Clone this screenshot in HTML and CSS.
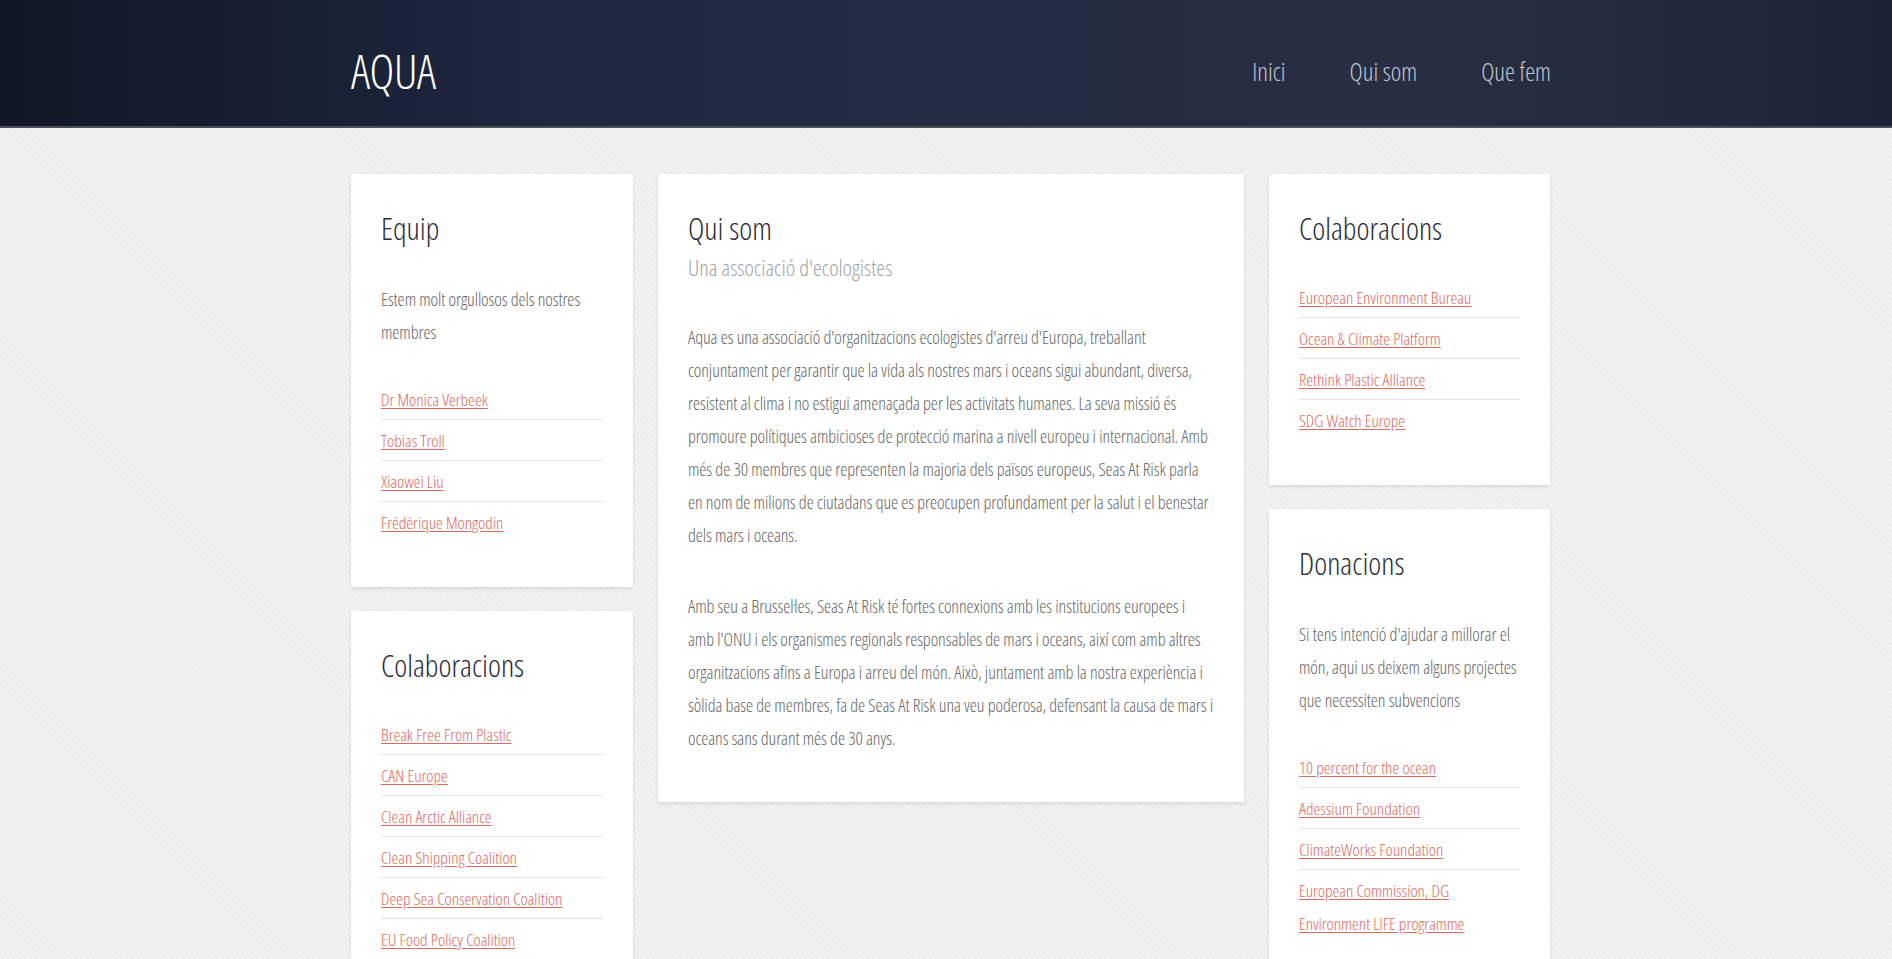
FILE: index.html
```html
<!DOCTYPE html>
<html lang="ca">
<head>
<meta charset="utf-8">
<title>AQUA</title>
<link rel="stylesheet" href="styles.css">
</head>
<body>
<header class="site-header">
  <div class="container header-inner">
    <a class="brand" href="#">AQUA</a>
    <nav class="main-nav">
      <a href="#">Inici</a>
      <a href="#">Qui som</a>
      <a href="#">Que fem</a>
    </nav>
  </div>
</header>

<main class="container layout">
  <div class="column">
    <section class="card">
      <h2 class="card-title">Equip</h2>
      <p class="card-text">Estem molt orgullosos dels nostres membres</p>
      <ul class="link-list">
        <li><a href="#">Dr Monica Verbeek</a></li>
        <li><a href="#">Tobias Troll</a></li>
        <li><a href="#">Xiaowei Liu</a></li>
        <li><a href="#">Frédérique Mongodin</a></li>
      </ul>
    </section>
    <section class="card">
      <h2 class="card-title">Colaboracions</h2>
      <ul class="link-list">
        <li><a href="#">Break Free From Plastic</a></li>
        <li><a href="#">CAN Europe</a></li>
        <li><a href="#">Clean Arctic Alliance</a></li>
        <li><a href="#">Clean Shipping Coalition</a></li>
        <li><a href="#">Deep Sea Conservation Coalition</a></li>
        <li><a href="#">EU Food Policy Coalition</a></li>
      </ul>
    </section>
  </div>

  <div class="column">
    <section class="card card-main">
      <h2 class="card-title">Qui som</h2>
      <h3 class="card-subtitle">Una associació d'ecologistes</h3>
      <p class="card-text">Aqua es una associació d'organitzacions ecologistes d'arreu d'Europa, treballant conjuntament per garantir que la vida als nostres mars i oceans sigui abundant, diversa, resistent al clima i no estigui amenaçada per les activitats humanes. La seva missió és promoure polítiques ambicioses de protecció marina a nivell europeu i internacional. Amb més de 30 membres que representen la majoria dels països europeus, Seas At Risk parla en nom de milions de ciutadans que es preocupen profundament per la salut i el benestar dels mars i oceans.</p>
      <p class="card-text">Amb seu a Brussel·les, Seas At Risk té fortes connexions amb les institucions europees i amb l'ONU i els organismes regionals responsables de mars i oceans, així com amb altres organitzacions afins a Europa i arreu del món. Això, juntament amb la nostra experiència i sòlida base de membres, fa de Seas At Risk una veu poderosa, defensant la causa de mars i oceans sans durant més de 30 anys.</p>
    </section>
  </div>

  <div class="column">
    <section class="card">
      <h2 class="card-title">Colaboracions</h2>
      <ul class="link-list">
        <li><a href="#">European Environment Bureau</a></li>
        <li><a href="#">Ocean &amp; Climate Platform</a></li>
        <li><a href="#">Rethink Plastic Alliance</a></li>
        <li><a href="#">SDG Watch Europe</a></li>
      </ul>
    </section>
    <section class="card">
      <h2 class="card-title">Donacions</h2>
      <p class="card-text">Si tens intenció d'ajudar a millorar el món, aqui us deixem alguns projectes que necessiten subvencions</p>
      <ul class="link-list">
        <li><a href="#">10 percent for the ocean</a></li>
        <li><a href="#">Adessium Foundation</a></li>
        <li><a href="#">ClimateWorks Foundation</a></li>
        <li><a href="#">European Commission, DG Environment LIFE programme</a></li>
      </ul>
    </section>
  </div>
</main>
</body>
</html>
```

FILE: styles.css
```css
* {
  box-sizing: border-box;
}

html, body {
  margin: 0;
  padding: 0;
}

body {
  font-family: "Open Sans", Roboto, "DejaVu Sans Condensed", sans-serif;
  font-stretch: 75%;
  font-weight: 300;
  color: #6a6a6a;
  background-color: #efefef;
  background-image: repeating-linear-gradient(45deg, #f3f3f3 0, #f3f3f3 2px, #ededed 2px, #ededed 4px);
  min-height: 100vh;
}

.container {
  width: 1210px;
  padding-left: 10px;
  margin: 0 auto;
}

/* Header */
.site-header {
  height: 128px;
  border-bottom: 2px solid #4a4f5a;
  background: linear-gradient(90deg, #111725 0%, #151c2c 9%, #1d2740 28%, #212b44 42%, #242c42 58%, #282e43 72%, #262c40 84%, #1d2336 100%);
}

.header-inner {
  height: 126px;
  padding-top: 16px;
  display: flex;
  align-items: center;
  justify-content: space-between;
}

.brand {
  color: #ffffff;
  text-decoration: none;
  font-size: 47px;
  letter-spacing: -0.4px;
  line-height: 1;
}

.main-nav {
  display: flex;
  gap: 64px;
}

.main-nav a {
  color: #c4c8d0;
  text-decoration: none;
  font-size: 25px;
  line-height: 1;
}

/* Layout */
.layout {
  display: grid;
  grid-template-columns: 282px 586px 281px;
  column-gap: 25px;
  align-items: start;
  padding-top: 46px;
  padding-bottom: 40px;
}

.column {
  display: flex;
  flex-direction: column;
  gap: 24px;
}

.card {
  background: #ffffff;
  padding: 36px 30px 45px;
  box-shadow: 0 2px 4px rgba(0, 0, 0, 0.09), 0 0 2px rgba(0, 0, 0, 0.04);
}

.card-main {
  padding-bottom: 47px;
}

.card-title {
  margin: 0;
  font-weight: 300;
  font-size: 31px;
  line-height: 36px;
  color: #2a2e37;
}

.card-subtitle {
  margin: 7px 0 38px;
  font-weight: 300;
  font-size: 22.4px;
  line-height: 30px;
  color: #a2a4a8;
}

.card-text {
  margin: 37px 0 30px;
  font-size: 18px;
  line-height: 33px;
  letter-spacing: -0.09px;
  color: #666666;
}

.card-main .card-text {
  margin: 0 0 38px;
}

.card-main .card-text:last-child {
  margin-bottom: 0;
}

.link-list {
  list-style: none;
  margin: 0;
  padding: 0;
}

.card-title + .link-list {
  margin-top: 31px;
}

.link-list li {
  padding: 4px 0 3px;
  border-bottom: 1px solid #e3e3e3;
  font-size: 17.2px;
  line-height: 33px;
}

.link-list li:last-child {
  border-bottom: none;
}

.link-list a {
  color: #e0695d;
  text-decoration: underline;
  text-underline-offset: 2px;
}
```
